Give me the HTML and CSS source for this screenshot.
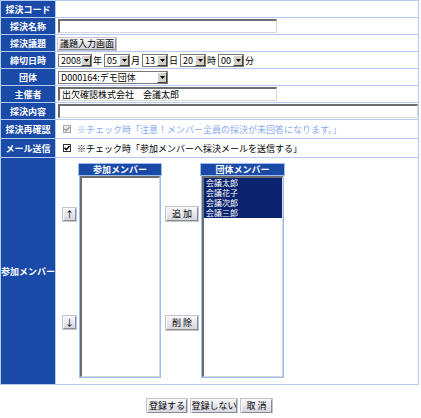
FILE: index.html
```html
<!DOCTYPE html>
<html lang="ja">
<head>
<meta charset="utf-8">
<title>採決登録</title>
<link rel="stylesheet" href="styles.css">
</head>
<body>
<table class="form">
  <tr class="h16"><th>採決コード</th><td></td></tr>
  <tr class="h16"><th>採決名称</th><td><input class="txt w219" type="text"></td></tr>
  <tr class="h16"><th>採決議題</th><td><span class="btn b-topic">議題入力画面</span></td></tr>
  <tr class="h16"><th>締切日時</th><td>
    <div class="dt">
      <span class="sel w34"><span class="v">2008</span><span class="a"><svg width="5" height="3" viewBox="0 0 5 3"><polygon points="0,0 5,0 2.5,3" fill="#000"/></svg></span></span><span class="unit">年</span>
      <span class="sel w26"><span class="v">05</span><span class="a"><svg width="5" height="3" viewBox="0 0 5 3"><polygon points="0,0 5,0 2.5,3" fill="#000"/></svg></span></span><span class="unit">月</span>
      <span class="sel w26"><span class="v">13</span><span class="a"><svg width="5" height="3" viewBox="0 0 5 3"><polygon points="0,0 5,0 2.5,3" fill="#000"/></svg></span></span><span class="unit">日</span>
      <span class="sel w26"><span class="v">20</span><span class="a"><svg width="5" height="3" viewBox="0 0 5 3"><polygon points="0,0 5,0 2.5,3" fill="#000"/></svg></span></span><span class="unit">時</span>
      <span class="sel w26"><span class="v">00</span><span class="a"><svg width="5" height="3" viewBox="0 0 5 3"><polygon points="0,0 5,0 2.5,3" fill="#000"/></svg></span></span><span class="unit">分</span>
    </div>
  </td></tr>
  <tr class="h16"><th>団体</th><td>
    <span class="sel w110"><span class="v">D000164:デモ団体</span><span class="a"><svg width="5" height="3" viewBox="0 0 5 3"><polygon points="0,0 5,0 2.5,3" fill="#000"/></svg></span></span>
  </td></tr>
  <tr class="h16"><th>主催者</th><td><span class="txt w219 filled">出欠確認株式会社　会議太郎</span></td></tr>
  <tr class="h16"><th>採決内容</th><td><input class="txt wfull" type="text"></td></tr>
  <tr class="h18"><th>採決再確認</th><td>
    <div class="chk-row disabled">
      <span class="cb"><svg width="8" height="8" viewBox="0 0 8 8"><path d="M1.5 3.8 L3.2 5.6 L6.5 2" fill="none" stroke="#9a9a9a" stroke-width="1.4"/></svg></span>
      <span class="note">※チェック時「注意！メンバー全員の採決が未回答になります。」</span>
    </div>
  </td></tr>
  <tr class="h18"><th>メール送信</th><td>
    <div class="chk-row">
      <span class="cb"><svg width="8" height="8" viewBox="0 0 8 8"><path d="M1.5 3.8 L3.2 5.6 L6.5 2" fill="none" stroke="#000" stroke-width="1.4"/></svg></span>
      <span class="note">※チェック時「参加メンバーへ採決メールを送信する」</span>
    </div>
  </td></tr>
  <tr class="members-row"><th>参加メンバー</th><td>
    <div class="members">
      <div class="ctrl-col">
        <span class="btn sq up">↑</span>
        <span class="btn sq down">↓</span>
      </div>
      <div class="list-col">
        <div class="list-head">参加メンバー</div>
        <div class="list-box"><div class="list-inner"></div></div>
      </div>
      <div class="ctrl-col mid">
        <span class="btn mv up">追 加</span>
        <span class="btn mv down">削 除</span>
      </div>
      <div class="list-col wide">
        <div class="list-head">団体メンバー</div>
        <div class="list-box"><div class="list-inner">
          <div class="opt">会議太郎</div>
          <div class="opt">会議花子</div>
          <div class="opt">会議次郎</div>
          <div class="opt">会議三郎</div>
        </div></div>
      </div>
    </div>
  </td></tr>
</table>
<div class="actions">
  <span class="btn act a1">登録する</span>
  <span class="btn act a2">登録しない</span>
  <span class="btn act a3">取 消</span>
</div>
</body>
</html>
```

FILE: styles.css
```css
html, body {
  margin: 0;
  padding: 0;
  background: #fff;
}
body {
  width: 421px;
  font-family: "Noto Sans CJK JP", "Noto Sans", sans-serif;
  font-size: 9px;
  color: #000;
}

.form {
  border-collapse: separate;
  border-spacing: 1px;
  background: #b4ccf4;
  width: 419px;
}
.form th {
  background: #1a4aa8;
  color: #fff;
  font-weight: bold;
  width: 53px;
  padding: 0;
  text-align: center;
  white-space: nowrap;
  font-size: 9px;
  line-height: 11px;
}
.form td {
  background: #fff;
  padding: 0 0 0 2px;
  vertical-align: middle;
}
.h16 th, .h16 td { height: 16px; }
.h18 th, .h18 td { height: 18px; }
.members-row th, .members-row td { height: 226px; }
.members-row td { vertical-align: top; }

/* text inputs */
.txt {
  display: block;
  box-sizing: border-box;
  height: 14px;
  margin: 0;
  padding: 0 0 0 2px;
  background: #fff;
  border-top: 2px solid #6c6c6c;
  border-left: 2px solid #6c6c6c;
  border-right: 1px solid #d8d8d8;
  border-bottom: 1px solid #d8d8d8;
  font: 9px/11px "Noto Sans CJK JP", sans-serif;
  outline: none;
}
.txt.filled { line-height: 11px; white-space: nowrap; }
.w219 { width: 219px; }
.wfull { width: 360px; }

/* buttons */
.btn {
  display: inline-flex;
  align-items: center;
  justify-content: center;
  box-sizing: border-box;
  border: 1px solid;
  border-color: #fafafc #8c8c94 #8c8c94 #fafafc;
  outline: 1px solid #c4c4cc;
  background: linear-gradient(#f6f6fa, #d6d6de);
  font-size: 9px;
  line-height: 10px;
  color: #000;
  white-space: nowrap;
}
.b-topic {
  width: 58px;
  height: 12px;
  margin-top: 1px;
}

/* select lookalikes */
.dt {
  display: flex;
  align-items: center;
}
.sel {
  display: inline-flex;
  box-sizing: border-box;
  height: 13px;
  border: 1px solid #7a7a7a;
  background: #fff;
  vertical-align: middle;
}
.sel .v {
  flex: 1;
  padding-left: 2px;
  line-height: 11px;
  white-space: nowrap;
  overflow: hidden;
}
.sel .a {
  box-sizing: border-box;
  width: 10px;
  height: 11px;
  background: #d4d0c8;
  border: 1px solid;
  border-color: #fff #404040 #404040 #fff;
  display: flex;
  align-items: center;
  justify-content: center;
}
.w34 { width: 34px; }
.w26 { width: 26px; }
.w110 { width: 110px; }
.unit {
  margin: 0 2px 0 1px;
  line-height: 11px;
}

/* checkbox rows */
.chk-row {
  display: flex;
  align-items: center;
  padding-left: 5px;
}
.cb {
  box-sizing: border-box;
  width: 8px;
  height: 8px;
  border: 1px solid #303030;
  background: #fff;
  display: flex;
  align-items: center;
  justify-content: center;
  margin-right: 6px;
}
.cb svg { flex: none; }
.disabled .cb {
  border-color: #a8a8a8;
  background: #ececec;
}
.note {
  white-space: nowrap;
  line-height: 11px;
}
.disabled .note { color: #88acf0; }

/* member lists */
.members {
  display: flex;
  padding: 6px 0 0 5px;
}
.ctrl-col {
  display: flex;
  flex-direction: column;
  align-items: flex-start;
  width: 13px;
  margin-right: 3px;
}
.ctrl-col.mid {
  width: 32px;
  margin: 0 3px 0 5px;
}
.btn.sq {
  width: 13px;
  height: 13px;
  font-size: 9px;
}
.ctrl-col .up { margin-top: 44px; }
.ctrl-col .down { margin-top: 95px; }
.ctrl-col.mid .up { margin-top: 43px; }
.ctrl-col.mid .down { margin-top: 95px; }
.btn.mv {
  width: 32px;
  height: 14px;
}
.list-col {
  display: flex;
  flex-direction: column;
  width: 82px;
}
.list-col.wide { width: 83px; }
.list-head {
  height: 11px;
  line-height: 11px;
  background: #1a4aa8;
  color: #fff;
  font-weight: bold;
  text-align: center;
  box-shadow: 0 0 0 1px #9cbcf4;
}
.list-box {
  box-sizing: border-box;
  height: 203px;
  border: 1px solid #9cbcf4;
}
.list-inner {
  box-sizing: border-box;
  height: 100%;
  background: #fff;
  border-top: 2px solid #6c6c6c;
  border-left: 2px solid #6c6c6c;
  border-right: 1px solid #d8d8d8;
  border-bottom: 1px solid #d8d8d8;
}
.opt {
  background: #0c2470;
  color: #fff;
  height: 10px;
  font-size: 8px;
  line-height: 10px;
  padding-left: 2px;
  white-space: nowrap;
  overflow: hidden;
}

/* bottom actions */
.actions {
  display: flex;
  justify-content: center;
  gap: 4px;
  width: 419px;
  margin-top: 14px;
}
.btn.act { height: 14px; }
.a1 { width: 40px; }
.a2 { width: 46px; }
.a3 { width: 31px; }
```
